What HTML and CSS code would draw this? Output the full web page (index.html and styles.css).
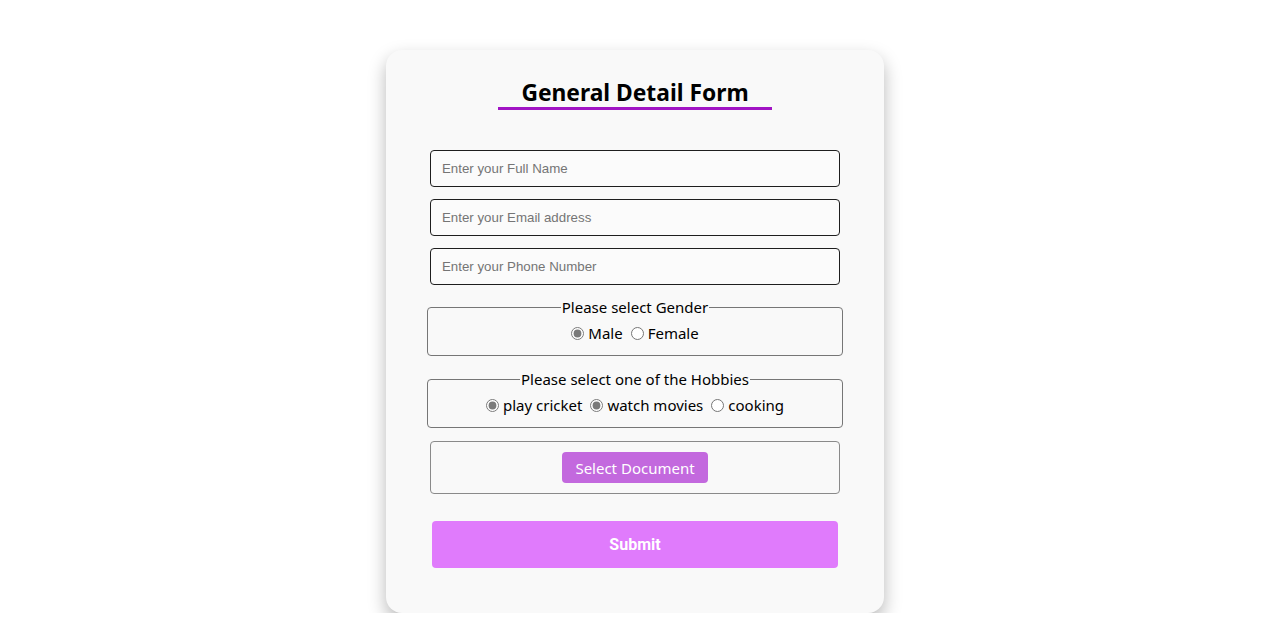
FILE: index.html
```html
<!DOCTYPE html>
<html>
<head>
<meta charset="utf-8">
<link rel="stylesheet" href="styles.css">
</head>
<body>
<div class="card">
  <div class="title-wrap"><h2 class="title">General Detail Form</h2></div>
  <form class="form">
    <div class="inputs">
      <input class="field" type="text" placeholder="Enter your Full Name">
      <input class="field" type="email" placeholder="Enter your Email address">
      <input class="field" type="tel" placeholder="Enter your Phone Number">
    </div>
    <fieldset class="group group-first">
      <legend class="legend">Please select Gender</legend>
      <div class="options">
        <label class="opt"><input type="radio" name="g" checked> Male</label>
        <label class="opt"><input type="radio" name="g"> Female</label>
      </div>
    </fieldset>
    <fieldset class="group">
      <legend class="legend">Please select one of the Hobbies</legend>
      <div class="options">
        <label class="opt"><input type="radio" name="h1" checked> play cricket</label>
        <label class="opt"><input type="radio" name="h2" checked> watch movies</label>
        <label class="opt"><input type="radio" name="h3"> cooking</label>
      </div>
    </fieldset>
    <div class="filebox">
      <button type="button" class="filebtn">Select Document</button>
    </div>
    <button type="button" class="submit">Submit</button>
  </form>
</div>
</body>
</html>
```
FILE: styles.css
```css
html, body {
  margin: 0;
  padding: 0;
  background: #ffffff;
}
body {
  font-family: "Noto Sans", "Open Sans", sans-serif;
  color: #000;
  padding-right: 2px;
}
.card {
  width: 498px;
  box-sizing: border-box;
  margin: 50px auto 0;
  background: #f9f9f9;
  border-radius: 16px;
  box-shadow: 0 8px 18px rgba(0, 0, 0, 0.28);
  padding: 28px 44px 45px;
}
.title-wrap {
  text-align: center;
}
.title {
  display: inline-block;
  margin: 0;
  font-size: 22.8px;
  font-weight: 700;
  line-height: 29px;
  padding: 0 23px;
  border-bottom: 3px solid #a114c4;
}
.form {
  margin-top: 40px;
  display: flex;
  flex-direction: column;
}
.inputs {
  display: flex;
  flex-direction: column;
  gap: 12px;
}
.field {
  height: 37px;
  box-sizing: border-box;
  border: 1px solid #1e1e1e;
  border-radius: 4px;
  background: #fbfbfb;
  padding: 0 11px;
  font-family: "Liberation Sans", Arial, sans-serif;
  font-size: 13.3px;
  outline: none;
}
.field::placeholder {
  color: #757575;
}
.group {
  margin: 13px -3px 0;
  padding: 0 10px 12px;
  border: 1px solid #767676;
  border-radius: 4px;
  text-align: center;
  min-width: 0;
}
.group-first {
  margin-top: 12px;
}
.legend {
  padding: 0 1px;
  font-size: 15px;
  line-height: 20px;
  margin: 0 auto;
}
.options {
  display: flex;
  justify-content: center;
  gap: 8px;
  margin-top: 6px;
  font-size: 15px;
  line-height: 20px;
}
.opt {
  display: inline-flex;
  align-items: center;
  gap: 4px;
}
.opt input {
  margin: 0;
  width: 13px;
  height: 13px;
  accent-color: #7a7a7a;
}
.filebox {
  margin-top: 13px;
  height: 53px;
  box-sizing: border-box;
  border: 1px solid #8a8a8a;
  border-radius: 4px;
  display: flex;
  align-items: center;
  justify-content: center;
}
.filebtn {
  height: 31px;
  width: 146px;
  border: none;
  border-radius: 4px;
  background: #c369de;
  color: #ffffff;
  font-family: "Noto Sans", "Open Sans", sans-serif;
  font-size: 15px;
  padding: 0;
}
.submit {
  margin: 27px 2px 0;
  height: 47px;
  border: none;
  border-radius: 4px;
  background: #e07bfc;
  color: #ffffff;
  font-family: Roboto, sans-serif;
  font-weight: 700;
  font-size: 16px;
}
```
